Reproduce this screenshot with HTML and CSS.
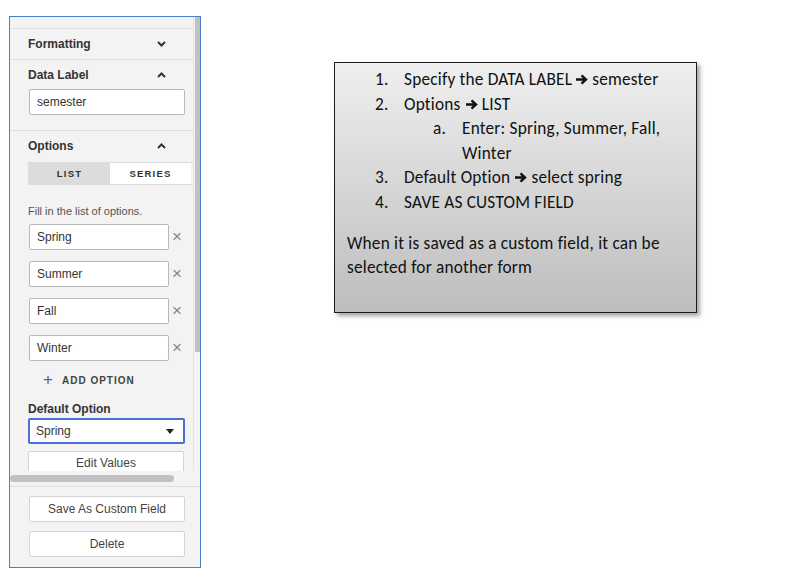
FILE: index.html
```html
<!DOCTYPE html>
<html lang="en">
<head>
    <meta charset="UTF-8">
    <meta name="viewport" content="width=device-width, initial-scale=1.0">
    <title>Custom field options</title>
    <link rel="stylesheet" href="styles.css">
</head>
<body>
    <div class="page">
        <div class="panel">
            <div class="scroller">
                <div class="viewport">
                    <div class="content">
                        <div class="strip"></div>

                        <div class="section head-only">
                            <span class="title">Formatting</span>
                            <svg class="chev" width="9" height="6" viewBox="0 0 9 6"><polyline points="1,1 4.5,4.5 8,1"/></svg>
                        </div>

                        <div class="section label-sec">
                            <div class="head">
                                <span class="title">Data Label</span>
                                <svg class="chev" width="9" height="6" viewBox="0 0 9 6"><polyline points="1,5 4.5,1.5 8,5"/></svg>
                            </div>
                            <div class="field wide">semester</div>
                        </div>

                        <div class="section options-sec">
                            <div class="head">
                                <span class="title">Options</span>
                                <svg class="chev" width="9" height="6" viewBox="0 0 9 6"><polyline points="1,5 4.5,1.5 8,5"/></svg>
                            </div>
                            <div class="tabs">
                                <span class="tab active">LIST</span>
                                <span class="tab">SERIES</span>
                            </div>
                            <p class="hint">Fill in the list of options.</p>
                            <div class="opt-list">
                                <div class="opt"><div class="field">Spring</div><span class="remove">&times;</span></div>
                                <div class="opt"><div class="field">Summer</div><span class="remove">&times;</span></div>
                                <div class="opt"><div class="field">Fall</div><span class="remove">&times;</span></div>
                                <div class="opt"><div class="field">Winter</div><span class="remove">&times;</span></div>
                            </div>
                            <div class="add"><span class="plus">+</span>ADD OPTION</div>
                            <div class="title sub">Default Option</div>
                            <div class="select">
                                <span>Spring</span>
                                <svg width="8" height="5" viewBox="0 0 8 5"><polygon points="0,0 8,0 4,5"/></svg>
                            </div>
                            <div class="btn">Edit Values</div>
                        </div>
                    </div>
                    <div class="hbar"><div class="thumb"></div></div>
                </div>
                <div class="vbar"><div class="thumb"></div></div>
            </div>
            <div class="actions">
                <div class="btn">Save As Custom Field</div>
                <div class="btn">Delete</div>
            </div>
        </div>

        <div class="note">
            <ol class="steps">
                <li><span class="num">1.</span><span>Specify the DATA LABEL<svg class="arrow tight" viewBox="0 0 13 11"><path d="M1 5.5h10M6.5 1.3l4.5 4.2-4.5 4.2"/></svg> semester</span></li>
                <li><span class="num">2.</span><span>Options <svg class="arrow" viewBox="0 0 13 11"><path d="M1 5.5h10M6.5 1.3l4.5 4.2-4.5 4.2"/></svg> LIST</span></li>
                <li class="subitem"><span class="num">a.</span><span>Enter: Spring, Summer, Fall, Winter</span></li>
                <li><span class="num">3.</span><span>Default Option <svg class="arrow" viewBox="0 0 13 11"><path d="M1 5.5h10M6.5 1.3l4.5 4.2-4.5 4.2"/></svg> select spring</span></li>
                <li><span class="num">4.</span><span>SAVE AS CUSTOM FIELD</span></li>
            </ol>
            <p class="para">When it is saved as a custom field, it can be selected for another form</p>
        </div>
    </div>
</body>
</html>
```

FILE: styles.css
```css
body{
    margin: 0;
    background: #fff;
    font-family: "Liberation Sans", Arial, sans-serif;
    color: #333;
}
.page{
    display: flex;
    align-items: flex-start;
    padding: 16px 0 0 9px;
}

/* side panel */
.panel{
    width: 190px;
    height: 550px;
    border: 1px solid #4a7fd1;
    background: #f3f3f3;
    display: flex;
    flex-direction: column;
}
.scroller{
    display: flex;
    height: 469px;
}
.viewport{
    width: 184px;
    display: flex;
    flex-direction: column;
}
.content{
    height: 454px;
    overflow: hidden;
    border-right: 1px solid #e4e4e4;
}
.strip{
    height: 11px;
    border-bottom: 1px solid #dedede;
}
.section{
    border-bottom: 1px solid #dedede;
    padding: 0 27px 0 18px;
}
.head-only, .head{
    display: flex;
    justify-content: space-between;
    align-items: center;
}
.head-only{
    height: 30px;
}
.title{
    font-size: 12px;
    font-weight: bold;
    line-height: 14px;
    color: #333;
}
.chev{
    fill: none;
    stroke: #333;
    stroke-width: 2;
}
.label-sec{
    padding-top: 8px;
    padding-bottom: 15px;
}
.label-sec .head{
    margin-bottom: 7px;
}
.field{
    box-sizing: border-box;
    height: 26px;
    width: 140px;
    background: #fff;
    border: 1px solid #b9b9b9;
    border-radius: 2px;
    font-size: 12px;
    line-height: 24px;
    padding-left: 7px;
    color: #333;
}
.field.wide{
    width: 156px;
    margin-left: 1px;
}
.options-sec{
    padding-top: 8px;
    padding-right: 0;
    border-bottom: none;
}
.options-sec .head{
    padding-right: 27px;
    margin-bottom: 9px;
}
.tabs{
    display: flex;
    width: 180px;
    height: 23px;
    box-sizing: border-box;
    border: 1px solid #dcdcdc;
}
.tab{
    width: 81px;
    text-align: center;
    font-size: 9.5px;
    font-weight: bold;
    letter-spacing: 1.2px;
    line-height: 21px;
    background: #fff;
    color: #333;
}
.tab.active{
    background: #dcdcdc;
}
.hint{
    margin: 19px 0 6px 0;
    font-size: 11px;
    line-height: 14px;
    color: #555;
}
.opt-list{
    display: flex;
    flex-direction: column;
    gap: 11px;
}
.opt{
    display: flex;
    align-items: center;
    padding-left: 1px;
}
.remove{
    margin-left: 3px;
    font-size: 17px;
    line-height: 16px;
    color: #888;
}
.add{
    margin: 12px 0 0 15px;
    font-size: 10px;
    font-weight: bold;
    letter-spacing: 1px;
    line-height: 14px;
    color: #444;
}
.plus{
    font-size: 17px;
    font-weight: normal;
    margin-right: 8px;
    color: #666;
    vertical-align: -1px;
}
.title.sub{
    margin-top: 14px;
    margin-bottom: 2px;
}
.select{
    box-sizing: border-box;
    width: 157px;
    height: 26px;
    border: 2px solid #4a6fd8;
    border-radius: 2px;
    background: #fff;
    display: flex;
    justify-content: space-between;
    align-items: center;
    padding: 0 9px 0 6px;
    font-size: 12px;
}
.select svg{
    fill: #222;
}
.btn{
    box-sizing: border-box;
    width: 156px;
    height: 26px;
    background: #fff;
    border: 1px solid #d4d4d4;
    border-radius: 2px;
    font-size: 12px;
    line-height: 24px;
    text-align: center;
    color: #444;
}
.options-sec .btn{
    margin-top: 7px;
    line-height: 22px;
}
.hbar{
    height: 15px;
    padding-top: 4px;
    box-sizing: border-box;
}
.hbar .thumb{
    width: 164px;
    height: 7px;
    background: #c1c1c1;
    border-radius: 4px;
}
.vbar{
    width: 6px;
}
.vbar .thumb{
    width: 5px;
    height: 335px;
    margin-left: 1px;
    background: #c1c1c1;
}
.actions{
    border-top: 1px solid #dedede;
    display: flex;
    flex-direction: column;
    gap: 9px;
    padding: 9px 0 0 19px;
}

/* note box */
.note{
    margin: 46px 0 0 133px;
    width: 363px;
    height: 251px;
    border: 1px solid #1c1c1c;
    background: linear-gradient(#efefef, #bdbdbd);
    box-shadow: 3px 3px 4px rgba(0, 0, 0, 0.35);
    font-family: "Carlito", "Lato", sans-serif;
    font-size: 17.3px;
    letter-spacing: 0.2px;
    color: #111;
    padding-top: 5px;
    box-sizing: border-box;
}
.steps{
    list-style: none;
    margin: 0;
    padding: 0 0 0 40px;
    line-height: 24.6px;
}
.steps li{
    display: flex;
}
.num{
    width: 29px;
    flex: none;
}
.subitem{
    padding-left: 58px;
}
.subitem span:last-child{
    width: 225px;
}
.arrow{
    width: 13px;
    height: 11px;
    fill: none;
    stroke: #111;
    stroke-width: 2.4;
}
.arrow.tight{
    margin-left: 3px;
}
.para{
    margin: 16px 0 0 12px;
    width: 340px;
    line-height: 24px;
}
```
